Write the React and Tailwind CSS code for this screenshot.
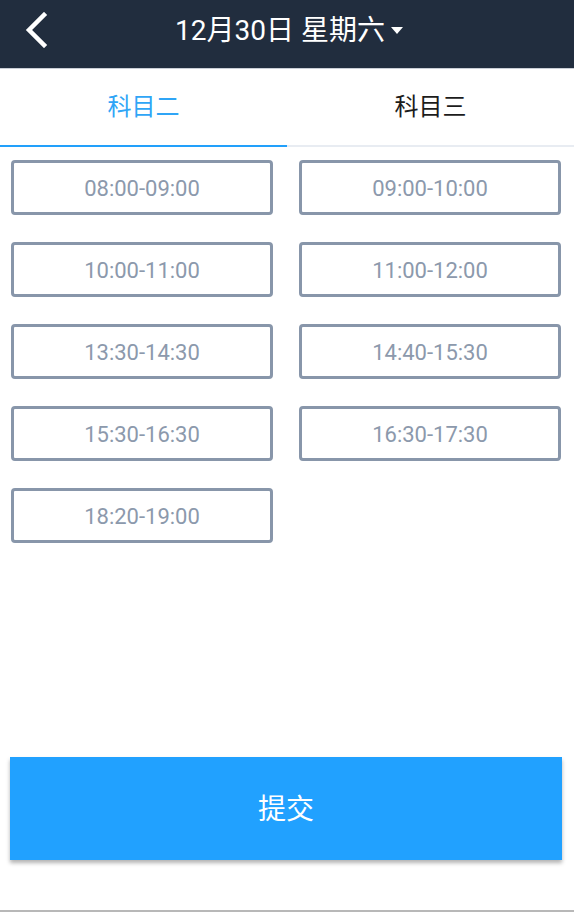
import React, { useState } from "react";

const slots = [
  "08:00-09:00",
  "09:00-10:00",
  "10:00-11:00",
  "11:00-12:00",
  "13:30-14:30",
  "14:40-15:30",
  "15:30-16:30",
  "16:30-17:30",
  "18:20-19:00",
];

const font = { fontFamily: "Roboto, 'Noto Sans CJK SC', sans-serif" };

export default function App() {
  const [tab, setTab] = useState(0);
  return (
    <div className="flex h-[912px] w-[574px] flex-col bg-white" style={font}>
      <header className="relative flex h-[69px] shrink-0 items-center justify-center border-b border-[#c9ced6] bg-[#212d3e]">
        <button className="absolute left-[24px] top-[12px] p-0">
          <svg width="26" height="36" viewBox="0 0 26 36">
            <path d="M20 3 L5 18 L20 33" fill="none" stroke="#fff" strokeWidth="4.5" strokeLinecap="square" />
          </svg>
        </button>
        <div className="flex items-center gap-[6px] pb-[6px] pl-[4px] text-[28px] text-white">
          <span>12月30日 星期六</span>
          <svg width="12" height="8" viewBox="0 0 12 8">
            <path d="M0 0 H12 L6 7 Z" fill="#fff" />
          </svg>
        </div>
      </header>

      <div className="flex h-[78px] shrink-0 border-b-2 border-[#e8ecf2]">
        {["科目二", "科目三"].map((t, i) => (
          <button
            key={t}
            onClick={() => setTab(i)}
            className={
              "-mb-[2px] flex flex-1 items-center justify-center border-b-2 text-[24px] " +
              (tab === i ? "border-[#22a0fb] text-[#2fa5f6]" : "border-transparent text-[#1c1c1c]")
            }
          >
            {t}
          </button>
        ))}
      </div>

      <div className="grid grid-cols-2 gap-x-[26px] gap-y-[27px] pl-[11px] pr-[13px] pt-[13px]">
        {slots.map((s) => (
          <div
            key={s}
            className="flex h-[55px] items-center justify-center rounded-[4px] border-[3px] border-[#8896aa] pt-[1px] text-[22px] text-[#8c99ac]"
          >
            {s}
          </div>
        ))}
      </div>

      <div className="flex-1" />

      <div className="pb-[50px] pl-[10px] pr-[12px]">
        <button className="flex h-[103px] w-full items-center justify-center bg-[#21a1ff] pt-[2px] text-[28px] text-white shadow-[0_3px_4px_rgba(0,0,0,0.3)]">
          提交
        </button>
      </div>
      <div className="h-[2px] shrink-0 bg-[#b8b8b8]" />
    </div>
  );
}
